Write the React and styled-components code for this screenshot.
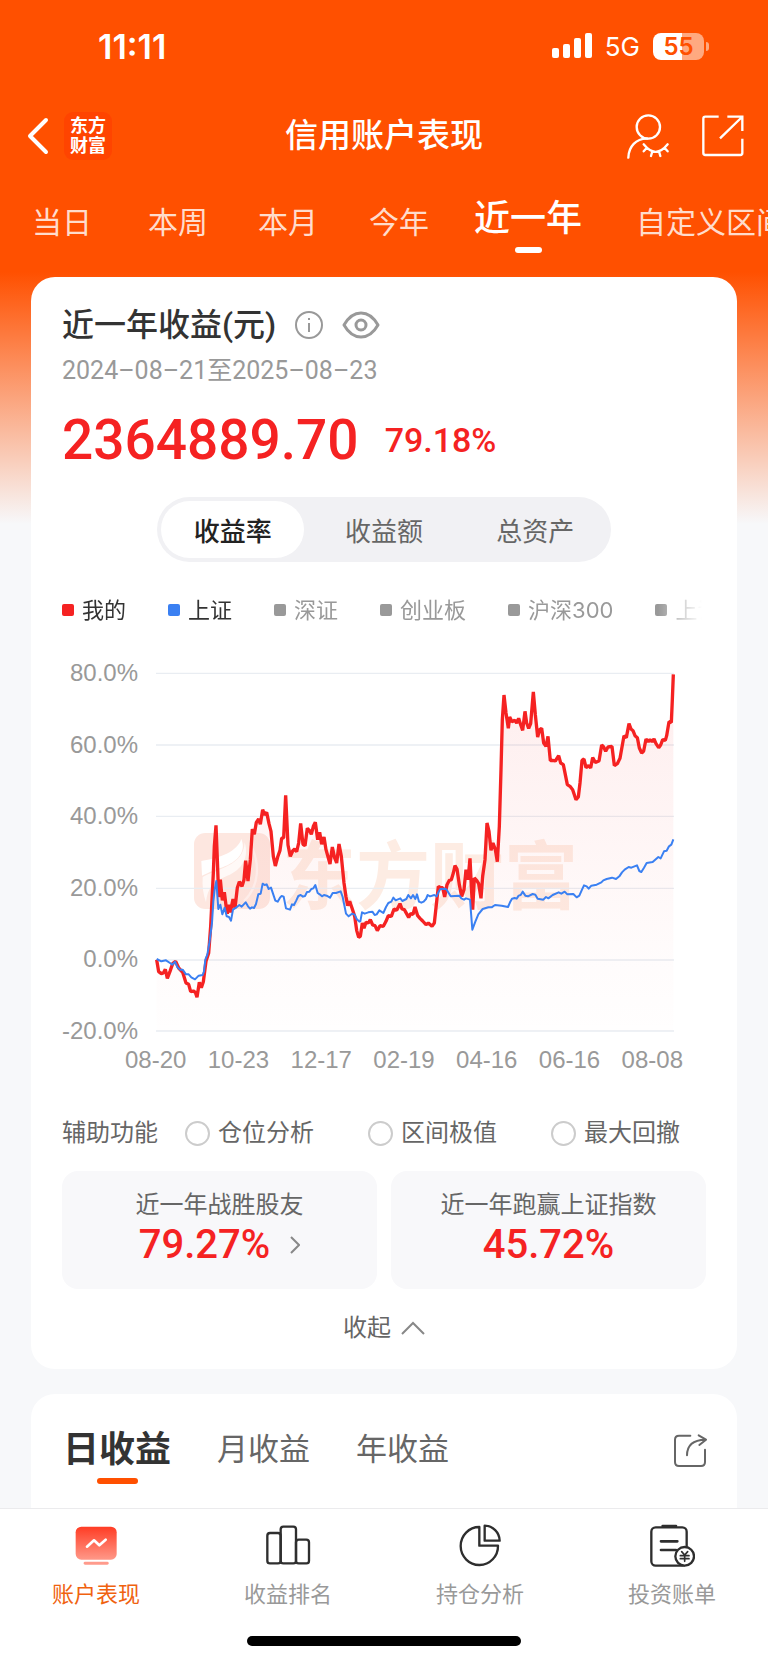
import React from "react";
import styled, { createGlobalStyle } from "styled-components";

const PERIODS = ["当日", "本周", "本月", "今年", "近一年", "自定义区间"];
const METRICS = ["收益率", "收益额", "总资产"];
const SERIES = [
  { name: "我的", color: "#f52222", on: true },
  { name: "上证", color: "#3a80f2", on: true },
  { name: "深证", color: "#999" },
  { name: "创业板", color: "#999" },
  { name: "沪深300", color: "#999" },
  { name: "上证50", color: "#999" },
];
const HELPERS = ["仓位分析", "区间极值", "最大回撤"];
const Y_TICKS = ["80.0%", "60.0%", "40.0%", "20.0%", "0.0%", "-20.0%"];
const X_TICKS = ["08-20", "10-23", "12-17", "02-19", "04-16", "06-16", "08-08"];
const GRID = [41, 256, 470, 686, 901, 1114];

// chart units: x 78..1632, y 40 (80%) .. 1114 (-20%)
const MINE =
  "80,900 86,936 94,942 100,940 106,929 112,956 120,935 128,912 137,905 146,925 158,938 168,970 176,974 182,996 190,994 196,998 201,1013 208,968 214,984 220,966 228,905 236,880 242,800 250,640 253,560 258,497 262,600 266,712 271,660 277,722 283,698 289,745 292,762 296,735 301,758 309,718 315,745 322,684 328,666 336,680 342,660 347,603 354,664 361,600 367,508 373,524 379,488 386,478 391,494 398,450 404,466 410,458 417,492 423,515 430,590 436,619 443,592 450,572 455,536 461,534 467,407 474,556 481,590 488,574 494,568 500,576 506,550 512,491 519,554 525,558 532,506 538,512 544,524 550,500 556,488 563,540 569,518 575,554 582,532 588,570 " +
  "600,613 607,562 614,595 620,610 627,553 634,590 642,670 648,712 653,738 659,725 666,745 674,770 680,812 686,833 691,830 697,790 702,806 708,788 715,790 721,780 728,796 735,798 742,813 750,798 760,800 768,785 775,768 784,770 792,748 800,752 810,732 816,748 823,750 836,773 842,762 849,764 855,742 863,768 870,776 878,784 888,795 895,790 906,800 913,790 919,735 925,680 932,684 938,684 944,712 951,675 958,662 964,660 970,640 975,618 981,628 988,675 995,710 1002,690 1008,630 1014,660 1020,596 1024,680 1028,750 1033,655 1040,662 1046,672 1053,716 1058,650 1065,600 1071,490 1077,515 1083,572 1089,550 1096,570 1102,606 1108,500 1113,330 1117,180 " +
  "1122,106 1128,160 1135,206 1139,172 1146,186 1154,182 1160,190 1166,176 1172,195 1178,212 1185,155 1190,190 1196,206 1202,192 1210,97 1216,165 1223,232 1229,210 1235,206 1241,250 1248,260 1254,230 1261,303 1268,302 1276,304 1286,288 1292,310 1300,315 1306,345 1312,375 1320,380 1328,390 1338,420 1345,412 1350,370 1356,302 1362,298 1368,324 1376,318 1382,325 1388,294 1396,308 1407,304 1415,256 1421,262 1427,275 1434,262 1446,260 1453,318 1462,312 1470,296 1476,262 1482,228 1489,234 1497,192 1503,208 1509,213 1515,228 1522,234 1528,265 1535,280 1541,274 1548,238 1555,246 1560,240 1566,246 1572,238 1578,252 1586,264 1592,256 1598,240 1606,242 1610,228 1617,186 1624,188 1627,120 1630,44";
const INDEX =
  "80,898 94,905 108,902 120,910 127,915 135,906 142,922 150,930 158,930 168,944 176,944 184,953 195,959 206,948 218,946 222,935 226,900 232,885 238,850 246,790 250,725 254,690 259,664 265,748 271,735 277,764 284,744 290,770 297,772 303,783 309,750 318,744 328,736 335,741 347,728 354,740 360,747 366,743 372,745 378,733 385,704 392,702 398,672 404,676 410,674 416,688 423,684 429,702 436,723 443,726 450,714 455,709 461,711 468,746 480,750 486,734 492,736 499,722 505,709 512,706 519,711 525,709 531,697 538,696 544,688 550,686 556,676 563,700 569,704 576,710 582,706 590,708 " +
  "600,714 608,700 618,700 632,695 638,712 648,762 656,770 666,762 674,765 680,778 688,786 691,785 696,758 704,762 715,758 727,756 734,766 740,764 748,752 760,760 768,742 775,730 784,726 790,714 797,722 811,716 817,724 829,718 835,706 843,716 849,706 856,718 861,704 867,726 874,729 881,726 888,718 893,706 900,710 913,706 920,710 926,696 931,688 944,687 950,690 962,710 988,708 994,716 1002,720 1008,716 1020,720 1027,810 1036,786 1045,764 1058,748 1075,743 1085,743 1095,736 1115,738 " +
  "1134,742 1140,728 1146,717 1154,715 1160,717 1166,708 1172,706 1178,696 1186,708 1194,710 1208,703 1216,705 1223,717 1240,720 1248,712 1255,716 1268,706 1286,698 1294,702 1304,696 1312,704 1330,703 1340,713 1348,708 1356,690 1362,677 1370,680 1376,687 1384,678 1400,675 1414,668 1420,662 1430,658 1446,654 1458,658 1468,650 1476,638 1484,630 1496,622 1504,624 1521,617 1528,634 1534,637 1542,624 1550,610 1568,607 1585,592 1592,596 1602,575 1610,573 1617,560 1624,555 1630,539";

function Chart() {
  return (
    <ChartBox>
      <YAxis>
        {Y_TICKS.map((t) => (
          <span key={t}>{t}</span>
        ))}
      </YAxis>
      <Plot>
        <Watermark>
          <svg viewBox="0 0 228 228" width="76" height="76">
            <rect width="228" height="228" rx="34" fill="#fde7e0" />
            <path
              d="M22 84C60 78 128 62 142 18C160 62 122 92 76 106C50 114 36 124 24 128Z"
              fill="#fff"
            />
            <path
              d="M26 132C70 108 150 98 152 28C168 82 136 116 92 132C60 144 40 164 36 208C28 186 24 160 26 132Z"
              fill="#fff"
              opacity="0.75"
            />
            <path d="M150 204C196 160 200 90 168 32" fill="none" stroke="#fff" strokeWidth="7" opacity="0.5" />
          </svg>
          <span>东方财富</span>
        </Watermark>
        <svg viewBox="78 40 1554 1074" fill="none" role="img" aria-label="收益率走势">
          <defs>
            <linearGradient id="area" x1="0" y1="0" x2="0" y2="1">
              <stop offset="0" stopColor="#f52222" stopOpacity="0.08" />
              <stop offset="0.8" stopColor="#f52222" stopOpacity="0.015" />
              <stop offset="1" stopColor="#f52222" stopOpacity="0.005" />
            </linearGradient>
          </defs>
          {GRID.map((y) => (
            <path key={y} d={`M78 ${y}H1632`} stroke="#e9edf2" strokeWidth="4" />
          ))}
          <polygon points={`80,1114 ${MINE} 1630,1114`} fill="url(#area)" />
          <polyline points={MINE} stroke="#f52222" strokeWidth="10" strokeLinejoin="bevel" />
          <polyline points={INDEX} stroke="#3a80f2" strokeWidth="6" strokeLinejoin="round" />
        </svg>
      </Plot>
    </ChartBox>
  );
}

const AccountIcon = () => (
  <svg viewBox="220 460 138 138" width="46" height="46">
    <defs>
      <linearGradient id="screen" x1="0" y1="0" x2="0" y2="1">
        <stop offset="0" stopColor="#ff3c24" />
        <stop offset="1" stopColor="#ff9888" />
      </linearGradient>
    </defs>
    <rect x="228" y="471" width="123" height="99" rx="17" fill="url(#screen)" />
    <rect x="252" y="576" width="75" height="9" rx="4" fill="#ff9b8c" />
    <path
      d="M262 531L283 512L299 527L318 510"
      fill="none"
      stroke="#fff"
      strokeWidth="8"
      strokeLinecap="round"
      strokeLinejoin="round"
    />
  </svg>
);

const RankIcon = () => (
  <svg viewBox="795 460 138 138" width="46" height="46" fill="none" stroke="#2e2e2e" strokeWidth="7">
    <rect x="802" y="490" width="40" height="91" rx="8" />
    <rect x="842" y="471" width="46" height="110" rx="8" />
    <rect x="888" y="510" width="39" height="71" rx="8" />
  </svg>
);

const PieIcon = () => (
  <svg
    viewBox="220 460 138 138"
    width="46"
    height="46"
    fill="none"
    stroke="#2e2e2e"
    strokeWidth="7"
    strokeLinejoin="round"
  >
    <path d="M287 472A56 57 0 1 0 343 528H287Z" />
    <path d="M303 468A46 46 0 0 1 348 513H303Z" />
  </svg>
);

const BillIcon = () => (
  <svg
    viewBox="795 460 138 138"
    width="46"
    height="46"
    fill="none"
    stroke="#2e2e2e"
    strokeWidth="7"
    strokeLinecap="round"
  >
    <rect x="802" y="473" width="106" height="115" rx="13" />
    <path d="M836 469H876M831 515H880M831 541H876" strokeWidth="8" />
    <circle cx="902" cy="560" r="28" fill="#fff" />
    <path d="M893 546L902 556L911 546M889 558H915M889 567H915M902 556V575" strokeWidth="5" />
  </svg>
);

const TABS = [
  { name: "账户表现", icon: <AccountIcon />, active: true },
  { name: "收益排名", icon: <RankIcon /> },
  { name: "持仓分析", icon: <PieIcon /> },
  { name: "投资账单", icon: <BillIcon /> },
];

function App() {
  return (
    <Page>
      <GlobalStyle />
      <StatusBar>
        <Clock>11:11</Clock>
        <StatusRight>
          <svg width="40" height="26" viewBox="0 0 40 26" fill="#fff">
            <rect x="0" y="15" width="7" height="10" rx="2" />
            <rect x="11" y="11" width="7" height="14" rx="2" />
            <rect x="22" y="5" width="7" height="20" rx="2" />
            <rect x="33" y="0" width="7" height="25" rx="2" />
          </svg>
          <Network>5G</Network>
          <Battery>
            <span>55</span>
          </Battery>
        </StatusRight>
      </StatusBar>

      <NavBar>
        <NavSide>
          <IconButton aria-label="返回">
            <svg width="28" height="38" viewBox="0 0 28 38" fill="none" stroke="#fff" strokeWidth="4">
              <path d="M24 3L8 19L24 35" strokeLinecap="round" strokeLinejoin="round" />
            </svg>
          </IconButton>
          <Logo>
            东方
            <br />
            财富
          </Logo>
        </NavSide>
        <h1>信用账户表现</h1>
        <NavSide $end>
          <IconButton aria-label="隐私">
            <svg width="46" height="48" viewBox="0 0 138 144" fill="none" stroke="#fff" strokeWidth="7">
              <circle cx="73" cy="45" r="35" />
              <path d="M13 137C14 104 36 79 70 80" strokeLinecap="round" />
              <path
                d="M59 97Q95 142 131 97M68 108L59 118M85 118L81 132M105 118L109 132M122 108L131 118"
                strokeLinecap="round"
              />
            </svg>
          </IconButton>
          <IconButton aria-label="分享">
            <svg width="46" height="46" viewBox="0 0 138 138" fill="none" stroke="#fff" strokeWidth="7">
              <path d="M56 11H16Q10 11 10 17V120Q10 126 16 126H121Q127 126 127 120V77" />
              <path d="M82 11H127V54M60 76L126 12" />
            </svg>
          </IconButton>
        </NavSide>
      </NavBar>

      <Periods>
        {PERIODS.map((p) => (
          <Period key={p} $active={p === "近一年"}>
            {p}
          </Period>
        ))}
      </Periods>

      <Content>
        <Card>
          <TitleRow>
            <h2>近一年收益(元)</h2>
            <IconButton aria-label="说明">
              <svg width="30" height="30" viewBox="0 0 30 30" fill="none" stroke="#999" strokeWidth="2">
                <circle cx="15" cy="15" r="13" />
                <path d="M15 13V22M15 8V10" />
              </svg>
            </IconButton>
            <IconButton aria-label="隐藏金额">
              <svg width="38" height="30" viewBox="0 0 38 30" fill="none" stroke="#999" strokeWidth="3">
                <path d="M2 15C6 8 11 3 19 3S32 8 36 15C32 22 27 27 19 27S6 22 2 15Z" strokeLinejoin="round" />
                <circle cx="19" cy="15" r="5" />
              </svg>
            </IconButton>
          </TitleRow>
          <DateRange>2024–08–21至2025–08–23</DateRange>
          <Profit>
            <strong>2364889.70</strong>
            <span>79.18%</span>
          </Profit>

          <Segmented>
            {METRICS.map((m, i) => (
              <Segment key={m} $active={i === 0}>
                {m}
              </Segment>
            ))}
          </Segmented>

          <Legend>
            {SERIES.map((s) => (
              <LegendItem key={s.name} $color={s.color} $on={s.on}>
                {s.name}
              </LegendItem>
            ))}
          </Legend>

          <Chart />
          <XAxis>
            {X_TICKS.map((t) => (
              <span key={t}>{t}</span>
            ))}
          </XAxis>

          <Helpers>
            <span>辅助功能</span>
            <HelperList>
              {HELPERS.map((h) => (
                <label key={h}>
                  <RoundCheck type="checkbox" />
                  {h}
                </label>
              ))}
            </HelperList>
          </Helpers>

          <Stats>
            <Stat>
              近一年战胜股友
              <StatValue>
                79.27%
                <svg width="10" height="18" viewBox="0 0 10 18" fill="none" stroke="#888" strokeWidth="2">
                  <path d="M1 1L9 9L1 17" />
                </svg>
              </StatValue>
            </Stat>
            <Stat>
              近一年跑赢上证指数
              <StatValue>45.72%</StatValue>
            </Stat>
          </Stats>

          <Collapse>
            收起
            <svg width="24" height="14" viewBox="0 0 24 14" fill="none" stroke="#888" strokeWidth="2">
              <path d="M1 13L12 2L23 13" />
            </svg>
          </Collapse>
        </Card>

        <DailyCard>
          <DailyTab $active>日收益</DailyTab>
          <DailyTab>月收益</DailyTab>
          <DailyTab>年收益</DailyTab>
          <ShareButton aria-label="分享收益">
            <svg
              viewBox="863 184 108 108"
              width="36"
              height="36"
              fill="none"
              stroke="#666"
              strokeWidth="6"
              strokeLinecap="round"
              strokeLinejoin="round"
            >
              <path d="M918 195H884Q872 195 872 207V274Q872 286 884 286H950Q962 286 962 274V237" />
              <path d="M908 254Q908 208 963 207M943 194L965 207L945 223" />
            </svg>
          </ShareButton>
        </DailyCard>
      </Content>

      <TabBar>
        <TabList>
          {TABS.map((t) => (
            <TabLink key={t.name} href="#" $active={t.active}>
              {t.icon}
              {t.name}
            </TabLink>
          ))}
        </TabList>
        <HomeBar />
      </TabBar>
    </Page>
  );
}

export default App;

const GlobalStyle = createGlobalStyle`
  * {
    box-sizing: border-box;
  }
  body {
    margin: 0;
    font-family: Roboto, "Noto Sans CJK SC", sans-serif;
    color: #333;
    background: #f7f8fa;
  }
  h1, h2 {
    margin: 0;
    font-weight: 500;
  }
  button {
    border: 0;
    padding: 0;
    background: none;
    font-family: inherit;
    color: inherit;
  }
  svg {
    display: block;
    flex: none;
  }
`;

const Page = styled.div`
  display: flex;
  flex-direction: column;
  height: 100vh;
  min-height: 1600px;
  overflow: hidden;
  background: linear-gradient(#ff5000 272px, #f7f8fa 524px);
`;

const StatusBar = styled.div`
  display: flex;
  flex: none;
  justify-content: space-between;
  align-items: center;
  height: 92px;
  padding: 0 64px 0 98px;
  color: #fff;
  font-family: Inter, sans-serif;
`;

const Clock = styled.span`
  font-size: 34px;
  font-weight: 600;
`;

const StatusRight = styled.div`
  display: flex;
  align-items: center;
  gap: 13px;
`;

const Network = styled.span`
  font-size: 26px;
`;

const Battery = styled.div`
  position: relative;
  width: 51px;
  height: 27px;
  border-radius: 8px;
  background: linear-gradient(90deg, #fff 56%, #ffa980 56%);
  color: #ff5000;
  font-size: 24px;
  font-weight: 600;
  line-height: 27px;
  text-align: center;

  &::after {
    content: "";
    position: absolute;
    right: -5px;
    top: 9px;
    width: 3px;
    height: 9px;
    border-radius: 0 4px 4px 0;
    background: #ffa980;
  }
`;

const NavBar = styled.header`
  display: grid;
  grid-template-columns: 1fr auto 1fr;
  align-items: center;
  flex: none;
  height: 87px;
  padding: 0 22px;
  color: #fff;

  h1 {
    font-size: 33px;
    line-height: 44px;
  }
`;

const NavSide = styled.div`
  display: flex;
  align-items: center;
  justify-content: ${(p) => (p.$end ? "flex-end" : "flex-start")};
  gap: ${(p) => (p.$end ? "30px" : "14px")};
`;

const IconButton = styled.button`
  display: flex;
  cursor: pointer;
`;

const Logo = styled.span`
  width: 48px;
  height: 48px;
  padding-top: 4px;
  border-radius: 9px;
  background: #ff4400;
  font-size: 18px;
  font-weight: 700;
  line-height: 20px;
  text-align: center;
`;

const Periods = styled.nav`
  display: grid;
  grid-template-columns: 116px 110px 111px 105px 162px auto;
  align-items: start;
  flex: none;
  height: 98px;
  padding: 22px 0 0 32px;
  overflow: hidden;
`;

const Period = styled.button`
  display: flex;
  flex-direction: column;
  align-items: center;
  justify-self: start;
  color: ${(p) => (p.$active ? "#fff" : "#ffdccc")};
  font-size: ${(p) => (p.$active ? "36px" : "30px")};
  font-weight: ${(p) => (p.$active ? 500 : 400)};
  line-height: ${(p) => (p.$active ? "36px" : "44px")};
  white-space: nowrap;

  &::after {
    content: "";
    display: ${(p) => (p.$active ? "block" : "none")};
    width: 27px;
    height: 6px;
    margin-top: 10px;
    border-radius: 3px;
    background: #fff;
  }
`;

const Content = styled.main`
  display: flex;
  flex-direction: column;
  flex: 1;
  gap: 25px;
  min-height: 0;
  padding: 0 31px;
`;

const Card = styled.section`
  flex: none;
  padding: 28px 31px 24px;
  border-radius: 24px;
  background: #fff;
`;

const TitleRow = styled.div`
  display: flex;
  align-items: center;
  gap: 18px;

  h2 {
    font-size: 32px;
    line-height: 40px;
  }
`;

const DateRange = styled.div`
  margin-top: 11px;
  color: #999;
  font-size: 25px;
  line-height: 30px;
`;

const Profit = styled.div`
  display: flex;
  align-items: center;
  gap: 26px;
  margin-top: 24px;
  color: #f52222;
  line-height: 60px;

  strong {
    font-size: 55px;
    font-weight: 500;
  }
  span {
    font-size: 34px;
    font-weight: 500;
  }
`;

const Segmented = styled.div`
  display: flex;
  width: 454px;
  height: 65px;
  margin: 27px auto 0;
  border-radius: 33px;
  background: #f1f1f4;
`;

const Segment = styled.button`
  flex: 1;
  margin: 4px;
  border-radius: 29px;
  background: ${(p) => (p.$active ? "#fff" : "transparent")};
  color: ${(p) => (p.$active ? "#222" : "#666")};
  font-size: 26px;
  font-weight: ${(p) => (p.$active ? 500 : 400)};
`;

const Legend = styled.div`
  display: flex;
  gap: 42px;
  margin: 33px 4px 0 0;
  overflow: hidden;
  mask-image: linear-gradient(90deg, #000 calc(100% - 44px), transparent);
`;

const LegendItem = styled.span`
  display: flex;
  align-items: center;
  flex: none;
  gap: 8px;
  color: ${(p) => (p.$on ? "#333" : "#999")};
  font-family: Inter, "Noto Sans CJK SC", sans-serif;
  font-size: 22px;
  line-height: 30px;

  &::before {
    content: "";
    width: 12px;
    height: 12px;
    border-radius: 2px;
    background: ${(p) => p.$color};
  }
`;

const ChartBox = styled.div`
  display: flex;
  gap: 18px;
  margin: 48px 32px 0 0;
  font-family: "Liberation Sans", sans-serif;
`;

const YAxis = styled.div`
  display: flex;
  flex-direction: column;
  justify-content: space-between;
  flex: none;
  width: 76px;
  margin: -14px 0;
  color: #999;
  font-size: 24px;
  line-height: 28px;
  text-align: right;
`;

const Plot = styled.div`
  position: relative;
  flex: 1;

  > svg {
    position: relative;
    width: 100%;
    overflow: visible;
  }
`;

const Watermark = styled.div`
  position: absolute;
  left: 38px;
  top: 160px;
  display: flex;
  align-items: center;
  gap: 12px;
  color: #fdece3;
  font-family: "Noto Sans CJK SC", sans-serif;
  font-size: 74px;
  font-weight: 700;
  line-height: 76px;
  white-space: nowrap;
`;

const XAxis = styled.div`
  display: flex;
  justify-content: space-between;
  margin: 15px 23px 0 63px;
  color: #999;
  font-family: "Liberation Sans", sans-serif;
  font-size: 24px;
  line-height: 28px;
`;

const Helpers = styled.div`
  display: flex;
  gap: 27px;
  margin-top: 42px;
  color: #666;
  font-size: 24px;
  line-height: 34px;
`;

const HelperList = styled.div`
  display: flex;
  flex: 1;
  justify-content: space-between;
  padding-right: 26px;

  label {
    display: flex;
    align-items: center;
    gap: 8px;
  }
`;

const RoundCheck = styled.input`
  appearance: none;
  width: 25px;
  height: 25px;
  margin: 0;
  border: 2px solid #ccc;
  border-radius: 50%;

  &:checked {
    border: 8px solid #ff5000;
  }
`;

const Stats = styled.div`
  display: grid;
  grid-template-columns: 1fr 1fr;
  gap: 14px;
  margin-top: 21px;
`;

const Stat = styled.div`
  display: flex;
  flex-direction: column;
  align-items: center;
  height: 118px;
  padding-top: 17px;
  border-radius: 16px;
  background: #f8f8fa;
  color: #666;
  font-size: 24px;
  line-height: 34px;
`;

const StatValue = styled.div`
  display: flex;
  align-items: center;
  gap: 20px;
  color: #f52222;
  font-size: 40px;
  font-weight: 500;
  line-height: 46px;
`;

const Collapse = styled.button`
  display: flex;
  align-items: center;
  gap: 10px;
  margin: 22px auto 0;
  color: #666;
  font-size: 24px;
  line-height: 34px;
`;

const DailyCard = styled.section`
  display: flex;
  align-items: flex-start;
  flex: 1;
  gap: 46px;
  padding: 38px 29px 0 32px;
  border-radius: 24px 24px 0 0;
  background: #fff;
`;

const DailyTab = styled.button`
  display: flex;
  flex-direction: column;
  align-items: center;
  color: ${(p) => (p.$active ? "#333" : "#666")};
  font-size: ${(p) => (p.$active ? "36px" : "31px")};
  font-weight: ${(p) => (p.$active ? 700 : 400)};
  line-height: 36px;

  &::after {
    content: "";
    display: ${(p) => (p.$active ? "block" : "none")};
    width: 41px;
    height: 6px;
    margin-top: 10px;
    border-radius: 3px;
    background: #ff5000;
  }
`;

const ShareButton = styled(IconButton)`
  margin-left: auto;
`;

const TabBar = styled.footer`
  flex: none;
  height: 155px;
  border-top: 1px solid #ebebed;
  background: #fff;
`;

const TabList = styled.nav`
  display: grid;
  grid-template-columns: repeat(4, 1fr);
  padding-top: 14px;
`;

const TabLink = styled.a`
  display: flex;
  flex-direction: column;
  align-items: center;
  gap: 10px;
  color: ${(p) => (p.$active ? "#f0620f" : "#999")};
  font-size: 22px;
  line-height: 32px;
  text-decoration: none;
`;

const HomeBar = styled.div`
  width: 274px;
  height: 10px;
  margin: 25px auto 0;
  border-radius: 5px;
  background: #000;
`;
